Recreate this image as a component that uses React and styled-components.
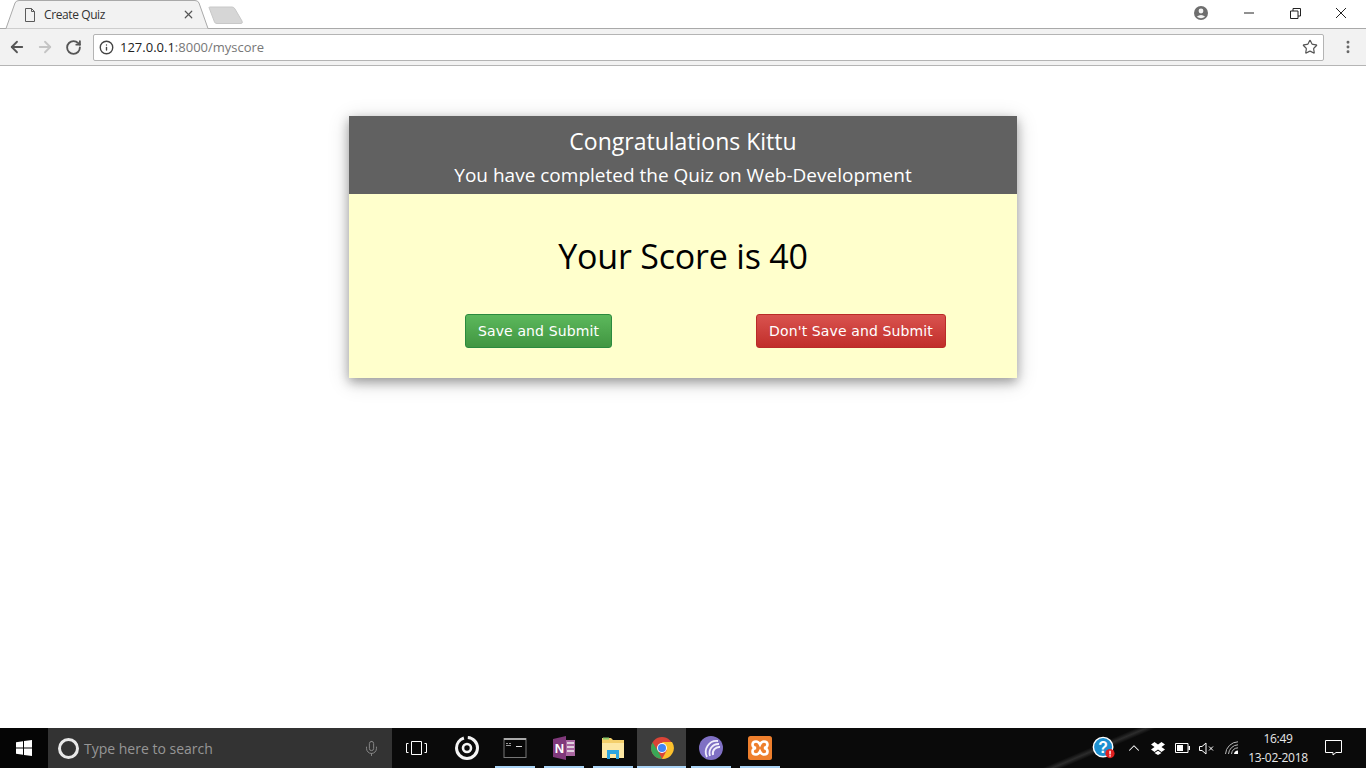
import React from "react";
import styled, { createGlobalStyle } from "styled-components";
import { ArrowLeft, ArrowRight, RotateCw, Info, Star, X, EllipsisVertical, ChevronUp, Mic } from "lucide-react";

const GlobalStyle = createGlobalStyle`
  html, body { margin: 0; padding: 0; height: 100%; background: #fff; overflow: hidden; }
  #root { height: 100%; }
`;

const Page = styled.div`
  display: flex;
  flex-direction: column;
  width: 1366px;
  height: 768px;
  font-family: "Open Sans", "Noto Sans", sans-serif;
`;

/* browser chrome */
const TabStrip = styled.div`
  display: flex;
  align-items: flex-start;
  height: 29px;
  background: #fff;
  position: relative;
`;
const TabBase = styled.div`
  position: absolute;
  left: 0;
  right: 0;
  bottom: 0;
  height: 1px;
  background: #a9a9a9;
`;
const Tab = styled.div`
  position: relative;
  z-index: 1;
  width: 212px;
  height: 29px;
  display: flex;
  align-items: center;
  padding: 0 0 0 24px;
  box-sizing: border-box;
  font-size: 12px;
  color: #333;
`;
const TabShape = styled.svg`
  position: absolute;
  left: 0;
  top: 0;
`;
const TabTitle = styled.span`
  position: relative;
  margin-left: 8px;
  width: 138px;
  letter-spacing: -0.4px;
`;
const TabClose = styled.span`
  position: relative;
  display: flex;
  color: #555;
`;
const FileIcon = styled.svg`
  position: relative;
  flex: none;
`;
const NewTab = styled.svg`
  flex: none;
  margin: 6px 0 0 -4px;
`;
const WindowControls = styled.div`
  margin-left: auto;
  margin-right: 2px;
  display: flex;
  align-items: center;
  height: 28px;
`;
const ProfileSlot = styled.div`
  width: 24px;
  display: flex;
  justify-content: center;
  margin-right: 13px;
  padding-bottom: 2px;
`;
const WinButton = styled.div`
  width: 46px;
  height: 28px;
  display: flex;
  align-items: center;
  justify-content: center;
  color: #222;
  padding-bottom: 2px;
  box-sizing: border-box;
`;
const Toolbar = styled.div`
  height: 37px;
  box-sizing: border-box;
  background: #f2f2f2;
  border-bottom: 1px solid #b5b5b5;
  display: flex;
  align-items: center;
  padding-left: 3px;
`;
const NavButton = styled.div`
  width: 28px;
  display: flex;
  justify-content: center;
  color: ${(p) => (p.$off ? "#c4c4c4" : "#555")};
`;
const AddressBar = styled.div`
  flex: 1;
  height: 27px;
  margin: 0 6px;
  box-sizing: border-box;
  background: #fff;
  border: 1px solid #b4b4b4;
  border-radius: 2px;
  display: flex;
  align-items: center;
  padding: 0 5px;
  font-size: 13px;
  color: #777;
`;
const Host = styled.span`
  color: #222;
  margin-left: 6px;
`;
const InfoSlot = styled.span`
  display: flex;
  color: #444;
`;
const StarSlot = styled.span`
  margin-left: auto;
  display: flex;
  color: #555;
`;
const MenuSlot = styled.div`
  width: 36px;
  display: flex;
  justify-content: center;
  color: #666;
`;

/* page content */
const Content = styled.main`
  flex: 1;
  padding-top: 50px;
  display: flex;
  justify-content: center;
  align-items: flex-start;
  background: #fff;
`;
const Card = styled.section`
  width: 668px;
  box-shadow: 0 4px 10px 0 rgba(0, 0, 0, 0.3), 0 4px 20px 0 rgba(0, 0, 0, 0.19);
`;
const CardHeader = styled.header`
  height: 78px;
  background: #616161;
  color: #fff;
  text-align: center;
  box-sizing: border-box;
  padding-top: 9px;
`;
const Title = styled.h2`
  margin: 0;
  font-size: 23px;
  font-weight: 400;
  line-height: 32px;
`;
const Subtitle = styled.h3`
  margin: 3px 0 0;
  font-size: 19px;
  font-weight: 400;
  line-height: 30px;
`;
const CardBody = styled.div`
  height: 184px;
  background: #ffffcc;
  box-sizing: border-box;
  padding-top: 38px;
`;
const Score = styled.h1`
  margin: 0;
  text-align: center;
  font-size: 34px;
  font-weight: 400;
  letter-spacing: -0.2px;
  line-height: 48px;
  color: #000;
`;
const Actions = styled.div`
  display: flex;
  margin-top: 34px;
  padding-left: 116px;
  gap: 144px;
`;
const Button = styled.button`
  height: 34px;
  padding: 0 12px;
  border-radius: 3px;
  border: 1px solid ${(p) => (p.$tone === "red" ? "#b92c28" : "#2b8a3e")};
  background: ${(p) =>
    p.$tone === "red"
      ? "linear-gradient(#d9534f, #c12e2a)"
      : "linear-gradient(#5cb85c, #419641)"};
  color: #fff;
  font-family: "DejaVu Sans", Verdana, sans-serif;
  font-size: 14px;
  letter-spacing: 0.12px;
  white-space: nowrap;
`;

/* taskbar */
const Taskbar = styled.footer`
  height: 40px;
  background: linear-gradient(157deg, #0a0a0a 444px, #2c2c2c 448px, #0a0a0a 452px);
  display: flex;
  align-items: stretch;
  color: #fff;
`;
const StartButton = styled.div`
  width: 48px;
  display: flex;
  align-items: center;
  justify-content: center;
  background: #050505;
`;
const SearchBox = styled.div`
  width: 344px;
  background: #333;
  display: flex;
  align-items: center;
  padding: 0 12px 0 10px;
  box-sizing: border-box;
  color: #969696;
  font-size: 14px;
`;
const Cortana = styled.span`
  width: 21px;
  height: 21px;
  box-sizing: border-box;
  border: 3px solid #e8e8e8;
  border-radius: 50%;
  margin-right: 5px;
  flex: none;
`;
const MicSlot = styled.span`
  margin-left: auto;
  display: flex;
  color: #8c8c8c;
`;
const AppSlot = styled.div`
  position: relative;
  width: 49px;
  display: flex;
  align-items: center;
  justify-content: center;
  background: ${(p) => (p.$active ? "#3d3d3d" : "transparent")};
  &::after {
    content: "";
    display: ${(p) => (p.$running ? "block" : "none")};
    position: absolute;
    bottom: 0;
    left: ${(p) => (p.$active ? "0" : "5px")};
    right: ${(p) => (p.$active ? "0" : "4px")};
    height: 2px;
    background: #a9d3f5;
  }
`;
const Tray = styled.div`
  margin-left: auto;
  display: flex;
  align-items: center;
`;
const TrayIcon = styled.div`
  width: 24px;
  margin-left: ${(p) => p.$gap || 0}px;
  display: flex;
  justify-content: center;
  color: #fff;
`;
const Clock = styled.div`
  width: 60px;
  margin-left: 4px;
  text-align: center;
  font-size: 12px;
  letter-spacing: -0.3px;
  line-height: 19px;
  color: #e8e8e8;
`;
const Notify = styled.div`
  width: 50px;
  margin-right: 8px;
  display: flex;
  justify-content: center;
`;

const Tile = ({ children }) => (
  <svg width="26" height="26" viewBox="0 0 26 26">
    {children}
  </svg>
);

const App = () => {
  return (
    <Page>
      <GlobalStyle />
      <TabStrip>
        <TabBase />
        <Tab>
          <TabShape width="212" height="29" viewBox="0 0 212 29">
            <path d="M0 28.5 H6 L15 3 Q16 0.5 19 0.5 H195 Q198 0.5 199 3 L208 28.5 H212" fill="#f2f2f2" stroke="#a9a9a9" />
          </TabShape>
          <FileIcon width="12" height="14" viewBox="0 0 12 14">
            <path d="M1.5 0.5 H7.5 L10.5 3.5 V13.5 H1.5 Z M7.5 0.5 V3.5 H10.5" fill="none" stroke="#5a5a5a" />
          </FileIcon>
          <TabTitle>Create Quiz</TabTitle>
          <TabClose>
            <X size={13} strokeWidth={2.2} />
          </TabClose>
        </Tab>
        <NewTab width="38" height="19" viewBox="0 0 38 19">
          <path d="M1 1.5 Q1 1 2 1 H24 Q26 1 27 3 L34 15 Q35 17.5 33 17.5 H9 Q7 17.5 6.5 16 Z" fill="#d6d6d6" stroke="#c8c8c8" />
        </NewTab>
        <WindowControls>
          <ProfileSlot>
            <svg width="14" height="14" viewBox="0 0 14 14">
              <circle cx="7" cy="7" r="7" fill="#6e6e6e" />
              <circle cx="7" cy="5" r="2.4" fill="#f4f4f4" />
              <path d="M2.8 10.8 Q7 7.2 11.2 10.8 Q7 13.6 2.8 10.8Z" fill="#f4f4f4" />
            </svg>
          </ProfileSlot>
          <WinButton>
            <svg width="10" height="2" viewBox="0 0 10 2">
              <path d="M0 1 H10" stroke="#222" />
            </svg>
          </WinButton>
          <WinButton>
            <svg width="11" height="11" viewBox="0 0 11 11">
              <path d="M0.5 3 H8 V10.5 H0.5 Z M3 3 V0.5 H10.5 V8 H8" fill="none" stroke="#222" />
            </svg>
          </WinButton>
          <WinButton>
            <svg width="12" height="12" viewBox="0 0 12 12">
              <path d="M1 1 L11 11 M11 1 L1 11" stroke="#222" />
            </svg>
          </WinButton>
        </WindowControls>
      </TabStrip>
      <Toolbar>
        <NavButton>
          <ArrowLeft size={18} strokeWidth={2.4} />
        </NavButton>
        <NavButton $off>
          <ArrowRight size={18} strokeWidth={2.4} />
        </NavButton>
        <NavButton>
          <RotateCw size={17} strokeWidth={2.6} />
        </NavButton>
        <AddressBar>
          <InfoSlot>
            <Info size={15} strokeWidth={2.2} />
          </InfoSlot>
          <Host>127.0.0.1</Host>:8000/myscore
          <StarSlot>
            <Star size={16} strokeWidth={1.8} />
          </StarSlot>
        </AddressBar>
        <MenuSlot>
          <EllipsisVertical size={16} strokeWidth={2.4} />
        </MenuSlot>
      </Toolbar>

      <Content>
        <Card>
          <CardHeader>
            <Title>Congratulations Kittu</Title>
            <Subtitle>You have completed the Quiz on Web-Development</Subtitle>
          </CardHeader>
          <CardBody>
            <Score>Your Score is 40</Score>
            <Actions>
              <Button $tone="green">Save and Submit</Button>
              <Button $tone="red">Don't Save and Submit</Button>
            </Actions>
          </CardBody>
        </Card>
      </Content>

      <Taskbar>
        <StartButton>
          <svg width="16" height="16" viewBox="0 0 16 16">
            <path d="M0 2.2 L7 1.2 V7.6 H0 Z M8 1 L16 0 V7.6 H8 Z M0 8.4 H7 V14.8 L0 13.8 Z M8 8.4 H16 V16 L8 15 Z" fill="#fff" />
          </svg>
        </StartButton>
        <SearchBox>
          <Cortana />
          Type here to search
          <MicSlot>
            <Mic size={17} strokeWidth={1.3} />
          </MicSlot>
        </SearchBox>
        <AppSlot>
          <svg width="21" height="14" viewBox="0 0 21 14">
            <path d="M5.5 0.5 H15.5 V13.5 H5.5 Z M2.5 2.5 H0.5 V11.5 H2.5 M18.5 2.5 H20.5 V11.5 H18.5" fill="none" stroke="#fff" />
          </svg>
        </AppSlot>
        <AppSlot>
          <Tile>
            <circle cx="14" cy="13" r="10.5" fill="none" stroke="#f4f4f4" strokeWidth="3" strokeDasharray="46 4 16 0" />
            <circle cx="14" cy="13" r="4" fill="none" stroke="#f4f4f4" strokeWidth="2.6" />
          </Tile>
        </AppSlot>
        <AppSlot $running>
          <Tile>
            <rect x="2" y="3.5" width="22" height="19" fill="#080808" stroke="#777" />
            <rect x="2" y="3" width="22" height="2" fill="#aaa" />
            <path d="M4 8.5 H6 M7 8.5 H9 M4 10.5 H9" stroke="#999" />
            <path d="M14 11.5 H20" stroke="#ddd" />
          </Tile>
        </AppSlot>
        <AppSlot $running>
          <Tile>
            <path d="M14 5 H24 V21 H14 Z" fill="#a866a0" />
            <path d="M16 8 H23 M16 12 H23 M16 16 H23" stroke="#f2f2f2" strokeWidth="1.6" />
            <path d="M2 4 L15 1 V25 L2 22 Z" fill="#80397b" />
            <text x="8.5" y="18" textAnchor="middle" fontFamily="Liberation Sans" fontWeight="700" fontSize="13" fill="#fff">N</text>
          </Tile>
        </AppSlot>
        <AppSlot $running>
          <Tile>
            <path d="M2 3 H11 L13 5 H24 V23 H2 Z" fill="#f4cf6b" />
            <path d="M2 8 H24 V23 H2 Z" fill="#fde7a3" />
            <path d="M3 2.5 H9 V4.5 H3 Z" fill="#8dc96b" />
            <path d="M7 24 V15 H19 V24 H16 V19 H10 V24 Z" fill="#2ea5e0" />
          </Tile>
        </AppSlot>
        <AppSlot $running $active>
          <Tile>
            <circle cx="13" cy="13" r="11" fill="#db4437" />
            <path d="M13 24 A11 11 0 0 1 3.5 7.5 L9 16 Z" fill="#3aa757" />
            <path d="M13 7 H23 A11 11 0 0 1 13 24 L18 15 Z" fill="#fbc02d" />
            <circle cx="13" cy="13" r="5" fill="#fff" />
            <circle cx="13" cy="13" r="4" fill="#4285f4" />
          </Tile>
        </AppSlot>
        <AppSlot $running>
          <Tile>
            <circle cx="13" cy="13" r="12" fill="#7f70c4" />
            <path d="M20 6 A11 11 0 0 0 9 22" fill="none" stroke="#f1eefc" strokeWidth="1.8" />
            <path d="M21 9 A9 9 0 0 0 12 21" fill="none" stroke="#f1eefc" strokeWidth="1.8" />
            <path d="M22 12 A6.5 6.5 0 0 0 15 20" fill="none" stroke="#f1eefc" strokeWidth="2" />
          </Tile>
        </AppSlot>
        <AppSlot $running>
          <Tile>
            <rect x="1" y="1" width="24" height="24" rx="2.5" fill="#ee7f2d" />
            <path d="M9 6.5 Q5.5 6.5 5.5 9.5 Q5.5 12.5 9 13 Q5.5 13.5 5.5 16.5 Q5.5 19.5 9 19.5 Q11.5 19.5 13 16.5 Q14.5 19.5 17 19.5 Q20.5 19.5 20.5 16.5 Q20.5 13.5 17 13 Q20.5 12.5 20.5 9.5 Q20.5 6.5 17 6.5 Q14.5 6.5 13 9.5 Q11.5 6.5 9 6.5Z" fill="none" stroke="#fff" strokeWidth="2.6" />
          </Tile>
        </AppSlot>

        <Tray>
          <TrayIcon>
            <svg width="26" height="26" viewBox="0 0 26 26">
              <circle cx="12" cy="12" r="10.5" fill="#1c8fd0" stroke="#fff" strokeWidth="1.6" />
              <text x="12" y="18" textAnchor="middle" fontFamily="Liberation Sans" fontWeight="700" fontSize="17" fill="#fff">?</text>
              <circle cx="19.5" cy="19" r="5" fill="#e02020" />
              <rect x="18.8" y="16" width="1.5" height="4" fill="#fff" />
              <rect x="18.8" y="20.8" width="1.5" height="1.5" fill="#fff" />
            </svg>
          </TrayIcon>
          <TrayIcon $gap={6}>
            <ChevronUp size={18} strokeWidth={1.4} />
          </TrayIcon>
          <TrayIcon>
            <svg width="14" height="13" viewBox="0 0 14 13">
              <path d="M3.5 0 L7 2.5 L10.5 0 L14 2.5 L10.5 5 L14 7.5 L10.5 10 L7 7.5 L3.5 10 L0 7.5 L3.5 5 L0 2.5 Z M3.5 11 L7 8.7 L10.5 11 L7 13 Z" fill="#fff" />
            </svg>
          </TrayIcon>
          <TrayIcon>
            <svg width="15" height="10" viewBox="0 0 15 10">
              <path d="M0.5 0.5 H13 V9.5 H0.5 Z" fill="none" stroke="#fff" />
              <rect x="2" y="2" width="6" height="6" fill="#fff" />
              <rect x="13.5" y="3" width="1.5" height="4" fill="#fff" />
            </svg>
          </TrayIcon>
          <TrayIcon>
            <svg width="15" height="13" viewBox="0 0 15 13">
              <path d="M0.5 4.5 H3 L7 1 V12 L3 8.5 H0.5 Z" fill="none" stroke="#fff" />
              <path d="M10 4.5 L14 8.5 M14 4.5 L10 8.5" stroke="#fff" />
            </svg>
          </TrayIcon>
          <TrayIcon $gap={2}>
            <svg width="14" height="14" viewBox="0 0 14 14">
              <path d="M0.5 13 A13 13 0 0 1 13 0.8 M3.5 13 A10 10 0 0 1 13 3.8 M6.5 13 A7 7 0 0 1 13 6.8" fill="none" stroke="#bbb" />
              <path d="M9 13 A4 4 0 0 1 13 9.5 V13 Z" fill="#fff" />
            </svg>
          </TrayIcon>
          <Clock>
            16:49
            <br />
            13-02-2018
          </Clock>
          <Notify>
            <svg width="17" height="16" viewBox="0 0 17 16">
              <path d="M0.5 0.5 H16.5 V12.5 H11 L8 15 V12.5 H0.5 Z" fill="none" stroke="#fff" />
            </svg>
          </Notify>
        </Tray>
      </Taskbar>
    </Page>
  );
};

export default App;
